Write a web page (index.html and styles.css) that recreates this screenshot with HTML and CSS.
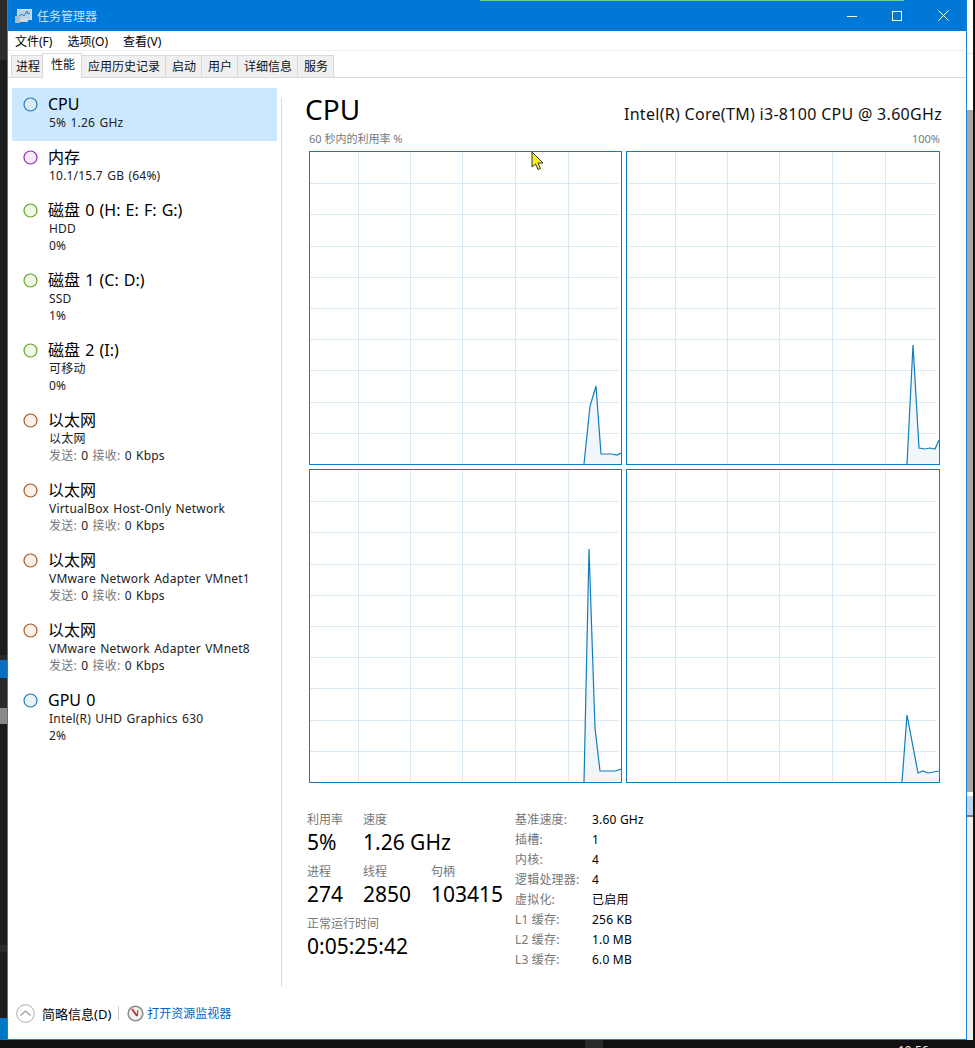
FILE: index.html
```html
<!DOCTYPE html>
<html lang="zh-CN">

<head>
  <meta charset="UTF-8">
  <meta name="viewport" content="width=device-width, initial-scale=1.0">
  <title>任务管理器</title>
  <link rel="stylesheet" href="styles.css">
</head>

<body>
  <div class="desktop">
    <div class="strip-left"></div>
    <div class="window">
      <div class="titlebar">
        <svg class="app-icon" width="18" height="16" viewBox="0 0 18 16">
          <rect x="2.5" y="1.5" width="14" height="10" fill="#b9d3e8" stroke="#d5dfe8" />
          <path d="M4 8 L7 6 L9 8 L12 3 L13 6 L15 5" fill="none" stroke="#3a7ab5" />
          <rect x="0" y="8" width="5" height="7" fill="#aebdca" />
          <rect x="5" y="12" width="8" height="2" fill="#c9d3dc" />
        </svg>
        <span class="title-text">任务管理器</span>
        <div class="win-controls">
          <svg width="10" height="10" viewBox="0 0 10 10" class="ctl-min"><path d="M0 5.5 H10" stroke="#fff" /></svg>
          <svg width="10" height="10" viewBox="0 0 10 10" class="ctl-max"><rect x=".5" y=".5" width="9" height="9" fill="none" stroke="#fff" /></svg>
          <svg width="11" height="11" viewBox="0 0 11 11" class="ctl-close"><path d="M.5 .5 L10.5 10.5 M10.5 .5 L.5 10.5" stroke="#fff" /></svg>
        </div>
      </div>
      <div class="menubar">
        <span>文件(F)</span>
        <span>选项(O)</span>
        <span>查看(V)</span>
      </div>
      <div class="tabs">
        <div class="tab first">进程</div>
        <div class="tab active">性能</div>
        <div class="tab">应用历史记录</div>
        <div class="tab">启动</div>
        <div class="tab">用户</div>
        <div class="tab">详细信息</div>
        <div class="tab">服务</div>
      </div>

      <div class="content">
        <div class="sidebar" id="sidebar"></div>
        <div class="main">
          <div class="main-head">
            <h1>CPU</h1>
            <div class="cpu-name">Intel(R) Core(TM) i3-8100 CPU @ 3.60GHz</div>
          </div>
          <div class="chart-caption">
            <span>60 秒内的利用率 %</span>
            <span>100%</span>
          </div>
          <div class="charts">
            <div class="chart"><svg viewBox="0 0 311 312"><g class="grid" id="g0"></g>
                <polygon class="area" points="274,312 280,254 286,234 291,302 302,302 307,303 311,301 311,312" />
                <polyline class="line" points="274,312 280,254 286,234 291,302 302,302 307,303 311,301" />
              </svg></div>
            <div class="chart"><svg viewBox="0 0 312 312"><g class="grid" id="g1"></g>
                <polygon class="area" points="280,312 286,193 292,296 298,297 303,296 308,297 312,288 312,312" />
                <polyline class="line" points="280,312 286,193 292,296 298,297 303,296 308,297 312,288" />
              </svg></div>
            <div class="chart"><svg viewBox="0 0 311 312"><g class="grid" id="g2"></g>
                <polygon class="area" points="274,312 279,79 285,258 290,301 305,301 311,299 311,312" />
                <polyline class="line" points="274,312 279,79 285,258 290,301 305,301 311,299" />
              </svg></div>
            <div class="chart"><svg viewBox="0 0 312 312"><g class="grid" id="g3"></g>
                <polygon class="area" points="275,312 280,245 291,303 296,301 301,303 312,301 312,312" />
                <polyline class="line" points="275,312 280,245 291,303 296,301 301,303 312,301" />
              </svg></div>
          </div>

          <div class="stats">
            <div class="stats-left">
              <div class="stat-row">
                <div class="stat stat-a"><label>利用率</label><b>5%</b></div>
                <div class="stat"><label>速度</label><b>1.26 GHz</b></div>
              </div>
              <div class="stat-row">
                <div class="stat stat-a"><label>进程</label><b>274</b></div>
                <div class="stat stat-b"><label>线程</label><b>2850</b></div>
                <div class="stat"><label>句柄</label><b>103415</b></div>
              </div>
              <div class="stat-row">
                <div class="stat"><label>正常运行时间</label><b>0:05:25:42</b></div>
              </div>
            </div>
            <div class="specs">
              <span class="k">基准速度:</span><span>3.60 GHz</span>
              <span class="k">插槽:</span><span>1</span>
              <span class="k">内核:</span><span>4</span>
              <span class="k">逻辑处理器:</span><span>4</span>
              <span class="k">虚拟化:</span><span>已启用</span>
              <span class="k">L1 缓存:</span><span>256 KB</span>
              <span class="k">L2 缓存:</span><span>1.0 MB</span>
              <span class="k">L3 缓存:</span><span>6.0 MB</span>
            </div>
          </div>
        </div>
      </div>

      <div class="footer">
        <svg width="19" height="19" viewBox="0 0 19 19">
          <circle cx="9.5" cy="9.5" r="8.8" fill="#fff" stroke="#a9a9a9" />
          <path d="M4.5 11.5 L9.5 7 L14.5 11.5" fill="none" stroke="#9a9a9a" stroke-width="1.3" />
        </svg>
        <span class="fewer">简略信息(D)</span>
        <span class="divider"></span>
        <svg width="17" height="17" viewBox="0 0 17 17">
          <circle cx="8.5" cy="8.5" r="7.3" fill="#f4f2ee" stroke="#8f8f8f" stroke-width="1.6" />
          <path d="M5 4 L10 11" stroke="#b8322e" stroke-width="1.8" />
          <path d="M11 5 L10 11" stroke="#444" />
        </svg>
        <span class="link">打开资源监视器</span>
      </div>
    </div>
    <div class="strip-right"></div>
  </div>

  <div class="accent"></div>
  <div class="task-item"></div>
  <div class="clock">10:56</div>
  <svg class="cursor" width="14" height="20" viewBox="0 0 14 20">
    <path d="M1 1 V16 L4.5 13 L7 18.5 L9.5 17.5 L7 12 H12 Z" fill="#f5f019" stroke="#333" />
  </svg>

  <script>
    const devices = [
      { name: "CPU", lines: ["5% 1.26 GHz"], color: "#1b7fb8", fill: "#dbe9f4", selected: true },
      { name: "内存", lines: ["10.1/15.7 GB (64%)"], color: "#9528b4", fill: "#f6ecf9" },
      { name: "磁盘 0 (H: E: F: G:)", lines: ["HDD", "0%"], color: "#5ea81e", fill: "#eff7e7" },
      { name: "磁盘 1 (C: D:)", lines: ["SSD", "1%"], color: "#5ea81e", fill: "#eff7e7" },
      { name: "磁盘 2 (I:)", lines: ["可移动", "0%"], color: "#5ea81e", fill: "#eff7e7" },
      { name: "以太网", lines: ["以太网"], net: true },
      { name: "以太网", lines: ["VirtualBox Host-Only Network"], net: true },
      { name: "以太网", lines: ["VMware Network Adapter VMnet1"], net: true },
      { name: "以太网", lines: ["VMware Network Adapter VMnet8"], net: true },
      { name: "GPU 0", lines: ["Intel(R) UHD Graphics 630", "2%"], color: "#1b7fb8", fill: "#eaf3fa" }
    ];

    const sidebar = document.getElementById('sidebar');
    devices.forEach(d => {
      const color = d.net ? "#a7591c" : d.color;
      const fill = d.net ? "#fbf1ea" : d.fill;
      const item = document.createElement('div');
      item.className = d.selected ? 'device selected' : 'device';
      let html = `<svg class="dot" width="15" height="15" viewBox="0 0 15 15"><circle cx="7.5" cy="7.5" r="6.5" fill="${fill}" stroke="${color}" stroke-width="1.2"/></svg>`;
      html += `<div class="device-text"><div class="device-name">${d.name}</div>`;
      d.lines.forEach(l => { html += `<div class="device-line">${l}</div>`; });
      if (d.net) html += `<div class="device-line"><span class="muted">发送:</span> 0 <span class="muted">接收:</span> 0 Kbps</div>`;
      html += `</div>`;
      item.innerHTML = html;
      sidebar.appendChild(item);
    });

    // grid lines of the four charts
    for (let i = 0; i < 4; i++) {
      const g = document.getElementById('g' + i);
      let s = '';
      for (let y = 1; y < 10; y++) {
        const py = Math.round(y * 31.2) + 0.5;
        s += `<line x1="0" x2="309" y1="${py}" y2="${py}"/>`;
      }
      [48.5, 100.5, 152.5, 205.5, 258.5].forEach(x => {
        s += `<line x1="${x}" x2="${x}" y1="0" y2="312"/>`;
      });
      g.innerHTML = s;
    }
  </script>
</body>

</html>
```

FILE: styles.css
```css
* {
  box-sizing: border-box;
}

html,
body {
  margin: 0;
  padding: 0;
  height: 1048px;
  overflow: hidden;
  background-color: #111;
}

body {
  position: relative;
  font-family: "Noto Sans", "Noto Sans CJK SC", sans-serif;
  color: #000;
}

.desktop {
  display: flex;
  height: 1040px;
}

.strip-left {
  width: 7px;
  background: linear-gradient(#2b2b2b 0 60px, #1c1c1c 60px 655px, #2a2a2a 655px 660px, #0a6fc0 660px 678px, #2a2a2a 678px 708px, #8a8a8a 708px 724px, #1c1c1c 724px 945px, #2c2c2c 945px 952px, #1c1c1c 952px 1018px, #0078c8 1018px);
}

.strip-right {
  width: 8px;
  background:
    linear-gradient(to right, transparent 6px, #111 6px),
    linear-gradient(#fff 0 53px, #e4e4e4 53px 54px, #fff 54px 110px, #a8a8a8 110px 792px, #fff 792px 796px, #c4d4e4 796px 815px, #777 815px 817px, #f0f0f0 817px);
}

.window {
  width: 960px;
  display: flex;
  flex-direction: column;
  background-color: #fff;
  border: 1px solid #1a82d8;
  border-top: none;
}

.titlebar {
  height: 31px;
  flex: none;
  display: flex;
  align-items: center;
  background-color: #0078d7;
  color: #c9e0f5;
  font-size: 12px;
  padding-left: 7px;
}

.title-text {
  margin-left: 4px;
}

.win-controls {
  margin-left: auto;
  display: flex;
  align-items: center;
  padding-right: 17px;
}

.ctl-min {
  margin-right: 35px;
}

.ctl-max {
  margin-right: 36px;
}

.menubar {
  height: 19px;
  flex: none;
  display: flex;
  gap: 15px;
  align-items: center;
  padding-left: 7px;
  font-size: 12px;
  border-bottom: 1px solid #f0f0f0;
  box-sizing: content-box;
}

.tabs {
  height: 27px;
  flex: none;
  display: flex;
  align-items: flex-end;
  padding-left: 4px;
  border-bottom: 1px solid #d9d9d9;
}

.tab {
  height: 22px;
  padding: 0 5px 0 6px;
  font-size: 12px;
  line-height: 22px;
  background-color: #f0f0f0;
  border: 1px solid #d9d9d9;
  border-bottom: none;
  margin-left: -1px;
  color: #111;
}

.tab.first {
  padding: 0 2px 0 4px;
}

.tab.active {
  height: 25px;
  line-height: 21px;
  background-color: #fff;
  position: relative;
  top: 1px;
  padding: 0 6px 0 8px;
}

.content {
  flex: 1;
  display: flex;
  min-height: 0;
}

.sidebar {
  width: 265px;
  margin: 10px 0 0 4px;
  flex: none;
}

.device {
  height: 70px;
  display: flex;
  padding: 6px 0 0 11px;
}

.device:nth-child(1),
.device:nth-child(2) {
  height: 53px;
}

.device.selected {
  background-color: #cce8ff;
}

.dot {
  margin: 3px 11px 0 0;
  flex: none;
}

.device-name {
  font-size: 16px;
  line-height: 20px;
  margin-left: -1px;
  margin-bottom: 1px;
  word-spacing: 1px;
}

.device-line {
  font-size: 12px;
  line-height: 16px;
  letter-spacing: 0.2px;
  word-spacing: 1px;
  color: #222;
}

.device-line + .device-line {
  margin-top: 1px;
}

.muted {
  color: #777;
}

.main {
  flex: 1;
  margin-top: 20px;
  margin-left: 4px;
  border-left: 1px solid #d9d9d9;
  padding-left: 27px;
  padding-right: 24px;
  min-width: 0;
}

.main-head {
  display: flex;
  justify-content: space-between;
  align-items: flex-end;
  height: 32px;
  margin-top: -5px;
  margin-left: -4px;
}

h1 {
  margin: 0;
  font-size: 28px;
  font-weight: 400;
  line-height: 32px;
}

.cpu-name {
  font-size: 16px;
  line-height: 22px;
  letter-spacing: 0.3px;
  color: #111;
}

.chart-caption {
  display: flex;
  justify-content: space-between;
  font-size: 11px;
  line-height: 14px;
  color: #777;
  margin: 7px 2px 5px 0;
}

.charts {
  display: grid;
  grid-template-columns: 313px 314px;
  grid-template-rows: 314px 314px;
  gap: 4px;
}

.chart {
  border: 1px solid #117dbb;
  overflow: hidden;
}

.chart svg {
  display: block;
  width: 100%;
  height: 100%;
}

.grid line {
  stroke: #d9eaf4;
  stroke-width: 1;
}

.area {
  fill: #f1f6fa;
}

.line {
  fill: none;
  stroke: #117dbb;
  stroke-width: 1.2;
}

.stats {
  display: flex;
  margin-top: 29px;
  margin-left: -2px;
}

.stats-left {
  width: 208px;
}

.stat-row {
  display: flex;
  margin-bottom: 8px;
}

.stat label {
  display: block;
  font-size: 12px;
  line-height: 16px;
  color: #777;
}

.stat b {
  display: block;
  font-size: 21px;
  font-weight: 400;
  line-height: 28px;
  white-space: nowrap;
}

.stat-a {
  width: 56px;
}

.stat-b {
  width: 68px;
}

.specs {
  display: grid;
  grid-template-columns: 77px auto;
  grid-auto-rows: 20px;
  font-size: 12px;
  line-height: 20px;
  letter-spacing: 0.2px;
  margin-top: -2px;
}

.specs .k {
  color: #777;
}

.footer {
  height: 52px;
  flex: none;
  display: flex;
  align-items: center;
  padding-left: 8px;
  font-size: 12px;
}

.fewer {
  margin-left: 7px;
  font-size: 13px;
}

.divider {
  width: 1px;
  height: 14px;
  background-color: #ccc;
  margin: 0 8px 0 7px;
}

.link {
  margin-left: 3px;
  color: #0066cc;
}

/* things that sit on top of the window */
.accent {
  position: absolute;
  left: 480px;
  top: 0;
  width: 424px;
  height: 1px;
  background-color: #6fd0a0;
}

.cursor {
  position: absolute;
  left: 531px;
  top: 151px;
}

.task-item {
  position: absolute;
  left: 585px;
  top: 1040px;
  width: 18px;
  height: 8px;
  background-color: #2b2b2b;
}

.clock {
  position: absolute;
  left: 898px;
  top: 1043px;
  color: #eee;
  font-size: 12px;
  line-height: 16px;
}
```
